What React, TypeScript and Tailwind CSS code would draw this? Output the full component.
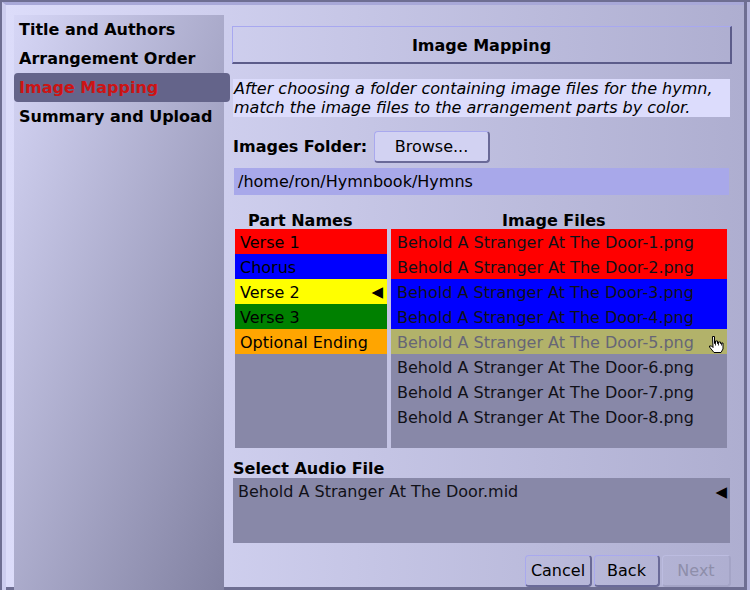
import React from 'react';

const parts = [
  { name: 'Verse 1', bg: 'bg-[#ff0000]' },
  { name: 'Chorus', bg: 'bg-[#0000ff]' },
  { name: 'Verse 2', bg: 'bg-[#ffff00]', arrow: true },
  { name: 'Verse 3', bg: 'bg-[#008000]' },
  { name: 'Optional Ending', bg: 'bg-[#ffa500]' },
];

const images = [
  { n: 1, bg: 'bg-[#ff0000]' },
  { n: 2, bg: 'bg-[#ff0000]' },
  { n: 3, bg: 'bg-[#0000ff]' },
  { n: 4, bg: 'bg-[#0000ff]' },
  { n: 5, bg: 'bg-[#b2b26a]', hover: true },
  { n: 6, bg: '' },
  { n: 7, bg: '' },
  { n: 8, bg: '' },
];

const steps = ['Title and Authors', 'Arrangement Order', 'Image Mapping', 'Summary and Upload'];

const HandCursor = () => (
  <svg width="17" height="19" viewBox="0 0 17 19" className="absolute right-[2px] top-[6px]">
    <path
      d="M4.5 1.5 h2 v7 h1 v-2.5 h2 v2.5 h1 v-1.5 h2 v1.5 h1 v-0.5 h1.5 v6 l-2 3.5 h-7 l-4.5 -5.5 v-1 h2 l1.5 1.5 z"
      fill="#fff"
      stroke="#000"
      strokeWidth="1"
      strokeLinejoin="round"
    />
    <path d="M7.5 8.5 v2 M10.5 8.5 v2 M13.5 8.5 v2" stroke="#000" strokeWidth="0.8" />
  </svg>
);

const Btn = ({ label, disabled, w }: { label: string; disabled?: boolean; w: string }) => (
  <div
    className={`${w} h-[32px] rounded-[4px] border-t border-l border-b-2 border-r-2 flex items-center justify-center pt-[1px] ${
      disabled
        ? 'text-[#8e8eaa] border-b-[#a4a4c6] border-r-[#a4a4c6] border-t-[#bcbce0] border-l-[#bcbce0]'
        : 'text-black border-t-[#a9a9ee] border-l-[#a9a9ee] border-b-[#6a6a98] border-r-[#6a6a98]'
    }`}
  >
    {label}
  </div>
);

export default function App() {
  return (
    <div className="w-[750px] h-[590px] overflow-hidden bg-[#6e6e92] flex flex-col font-['DejaVu_Sans',sans-serif] text-[16px] text-black">
      <div className="h-[2px] shrink-0" />
      <div className="flex flex-1 min-h-0">
        <div className="w-[2px] shrink-0" />
        <div className="w-[742px] shrink-0 flex flex-col border-t-[3px] border-t-[#a8a8d8] border-l-[4px] border-l-[#cdcdef]">
          <div className="flex-1 flex bg-linear-to-r from-[#dcdcfa] to-[#aeaed0] mb-[3px]">
            {/* sidebar */}
            <div className="ml-[8px] mt-[10px] w-[210px] -mb-[3px] bg-linear-to-br from-[#d6d6f6] to-[#8282a2] font-bold">
              {steps.map((s) => (
                <div
                  key={s}
                  className={`h-[29px] flex items-center pl-[5px] pt-[1px] ${
                    s === 'Image Mapping' ? 'w-[216px] bg-[#64648a] rounded-[4px] text-[#cc1414]' : ''
                  }`}
                >
                  {s}
                </div>
              ))}
            </div>

            {/* main */}
            <div className="flex-1 pl-[8px] pr-[12px] pt-[21px] flex flex-col">
              <div className="h-[38px] pt-[3px] border-t border-l border-[#a8a8f0] border-b-2 border-r-2 border-b-[#5c5c8a] border-r-[#5c5c8a] flex items-center justify-center font-bold">
                Image Mapping
              </div>

              <div className="mt-[15px] ml-[1px] mr-[2px] h-[38px] bg-[#dcdcfc] italic leading-[19px] pl-[1px]">
                <div>After choosing a folder containing image files for the hymn,</div>
                <div>match the image files to the arrangement parts by color.</div>
              </div>

              <div className="mt-[14px] flex items-center h-[32px]">
                <span className="font-bold w-[141px] ml-[1px]">Images Folder:</span>
                <div className="w-[116px] h-[32px] rounded-[4px] bg-[#d2d2f2] border-t border-l border-[#a9a9ee] border-b-2 border-r-2 border-b-[#6a6a98] border-r-[#6a6a98] flex items-center justify-center">
                  Browse...
                </div>
              </div>

              <div className="mt-[5px] ml-[2px] mr-[3px] h-[27px] bg-[#a8a8ea] flex items-center pl-[4px] pt-[1px]">
                /home/ron/Hymnbook/Hymns
              </div>

              <div className="mt-[16px] h-[18px] leading-[18px] flex font-bold pt-[1px]">
                <span className="pl-[16px] w-[159px]">Part Names</span>
                <span className="pl-[111px]">Image Files</span>
              </div>

              <div className="ml-[3px] flex gap-[4px] h-[219px]">
                <div className="w-[152px] bg-[#8888a8]">
                  {parts.map((p) => (
                    <div key={p.name} className={`h-[25px] flex items-center pl-[5px] pr-[4px] pt-[2px] ${p.bg}`}>
                      <span className="flex-1">{p.name}</span>
                      {p.arrow && <span className="text-[15px]">◀</span>}
                    </div>
                  ))}
                </div>
                <div className="w-[336px] bg-[#8888a8]">
                  {images.map((im) => (
                    <div
                      key={im.n}
                      className={`relative h-[25px] flex items-center pl-[6px] pt-[2px] ${im.bg} ${
                        im.hover ? 'text-[#666676]' : 'text-[#111118]'
                      }`}
                    >
                      Behold A Stranger At The Door-{im.n}.png
                      {im.hover && <HandCursor />}
                    </div>
                  ))}
                </div>
              </div>

              <div className="mt-[11px] h-[18px] leading-[18px] font-bold ml-[1px] pt-[1px]">Select Audio File</div>
              <div className="mt-[1px] ml-[1px] mr-[2px] h-[65px] bg-[#8888a8] flex items-start pl-[5px] pr-[3px] pt-[2px]">
                <span className="flex-1 text-[#111118]">Behold A Stranger At The Door.mid</span>
                <span className="text-[15px] mt-[1px]">◀</span>
              </div>

              <div className="mt-[12px] flex justify-end gap-[2px] pr-[1px]">
                <Btn label="Cancel" w="w-[67px]" />
                <Btn label="Back" w="w-[66px]" />
                <Btn label="Next" w="w-[69px]" disabled />
              </div>
            </div>
          </div>
        </div>
        <div className="w-[3px] shrink-0" />
        <div className="w-[3px] shrink-0 bg-[#b4b4dc]" />
      </div>
    </div>
  );
}
